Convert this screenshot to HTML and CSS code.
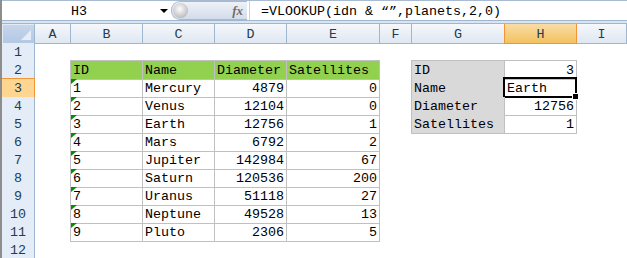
FILE: index.html
```
<!DOCTYPE html>
<html lang="en">
<head>
    <meta charset="UTF-8">
    <title>Planets - VLOOKUP</title>
    <link rel="stylesheet" href="styles.css">
</head>
<body>
    <div class="excel">
        <div class="fbar">
            <div class="namebox"><span class="ref">H3</span><span class="drop"></span></div>
            <div class="fxbox"><span class="ball"></span><span class="fx">fx</span></div>
            <div class="formula">=VLOOKUP(idn &amp; “”,planets,2,0)</div>
        </div>
        <div class="split"></div>

        <div class="sheet">
            <div class="row head">
                <div class="corner"></div>
                <div class="ch">A</div><div class="ch">B</div><div class="ch">C</div><div class="ch">D</div>
                <div class="ch">E</div><div class="ch">F</div><div class="ch">G</div><div class="ch sel">H</div><div class="ch">I</div>
            </div>
            <div class="row">
                <div class="rh">1</div>
                <div></div><div></div><div></div><div></div><div></div><div></div><div></div><div></div><div></div>
            </div>
            <div class="row">
                <div class="rh">2</div><div></div>
                <div class="c t hd top lft">ID</div><div class="c t hd top">Name</div><div class="c t hd top">Diameter</div><div class="c t hd top">Satellites</div>
                <div></div>
                <div class="c t lab top lft">ID</div><div class="c t num top">3</div><div></div>
            </div>
            <div class="row">
                <div class="rh sel">3</div><div></div>
                <div class="c t lft flag">1</div><div class="c t">Mercury</div><div class="c t num">4879</div><div class="c t num">0</div>
                <div></div>
                <div class="c t lab lft">Name</div><div class="c t active">Earth</div><div></div>
            </div>
            <div class="row">
                <div class="rh">4</div><div></div>
                <div class="c t lft flag">2</div><div class="c t">Venus</div><div class="c t num">12104</div><div class="c t num">0</div>
                <div></div>
                <div class="c t lab lft">Diameter</div><div class="c t num">12756</div><div></div>
            </div>
            <div class="row">
                <div class="rh">5</div><div></div>
                <div class="c t lft flag">3</div><div class="c t">Earth</div><div class="c t num">12756</div><div class="c t num">1</div>
                <div></div>
                <div class="c t lab lft">Satellites</div><div class="c t num">1</div><div></div>
            </div>
            <div class="row">
                <div class="rh">6</div><div></div>
                <div class="c t lft flag">4</div><div class="c t">Mars</div><div class="c t num">6792</div><div class="c t num">2</div>
                <div></div><div></div><div></div><div></div>
            </div>
            <div class="row">
                <div class="rh">7</div><div></div>
                <div class="c t lft flag">5</div><div class="c t">Jupiter</div><div class="c t num">142984</div><div class="c t num">67</div>
                <div></div><div></div><div></div><div></div>
            </div>
            <div class="row">
                <div class="rh">8</div><div></div>
                <div class="c t lft flag">6</div><div class="c t">Saturn</div><div class="c t num">120536</div><div class="c t num">200</div>
                <div></div><div></div><div></div><div></div>
            </div>
            <div class="row">
                <div class="rh">9</div><div></div>
                <div class="c t lft flag">7</div><div class="c t">Uranus</div><div class="c t num">51118</div><div class="c t num">27</div>
                <div></div><div></div><div></div><div></div>
            </div>
            <div class="row">
                <div class="rh">10</div><div></div>
                <div class="c t lft flag">8</div><div class="c t">Neptune</div><div class="c t num">49528</div><div class="c t num">13</div>
                <div></div><div></div><div></div><div></div>
            </div>
            <div class="row">
                <div class="rh">11</div><div></div>
                <div class="c t lft flag">9</div><div class="c t">Pluto</div><div class="c t num">2306</div><div class="c t num">5</div>
                <div></div><div></div><div></div><div></div>
            </div>
            <div class="row">
                <div class="rh">12</div>
                <div></div><div></div><div></div><div></div><div></div><div></div><div></div><div></div><div></div>
            </div>
        </div>
    </div>
</body>
</html>
```

FILE: styles.css
```
body {
    margin: 0;
    background: #fff;
    font-family: "Liberation Mono", "DejaVu Sans Mono", monospace;
    font-size: 13.33px;
    color: #000;
}

.excel {
    border-left: 2px solid #8d8d8d;
    height: 258px;
    overflow: hidden;
}

/* formula bar */
.fbar {
    display: flex;
    height: 20px;
    box-sizing: border-box;
    border-top: 1px solid #a9bbd1;
}

.namebox {
    width: 168px;
    display: flex;
    align-items: center;
    background: #fff;
}

.ref {
    flex: 1;
    text-align: center;
    padding: 3px 4px 0 0;
    line-height: 16px;
}

.drop {
    width: 0;
    height: 0;
    margin: 1px 2px 0 0;
    border-left: 4px solid transparent;
    border-right: 4px solid transparent;
    border-top: 4px solid #000;
}

.fxbox {
    width: 76px;
    margin: 0 2px 0 1px;
    display: flex;
    align-items: center;
    justify-content: space-between;
    box-sizing: border-box;
    border: 1px solid #a8b9cf;
    border-right: none;
    border-radius: 9px 0 0 9px;
    background: linear-gradient(#eef2f8, #d3dceb);
}

.ball {
    width: 15px;
    height: 15px;
    margin-left: 1px;
    border-radius: 50%;
    background: radial-gradient(circle at 45% 40%, #fdfdfd, #c9c9c9 60%, #9c9c9c);
}

.fx {
    font-family: "Liberation Serif", serif;
    font-style: italic;
    font-weight: bold;
    font-size: 13px;
    color: #6d6d6d;
    margin-right: 4px;
}

.formula {
    flex: 1;
    padding: 3px 0 0 11px;
    line-height: 16px;
    border-left: 1px solid #c5d3e5;
    background: #fff;
    white-space: nowrap;
}

.split {
    height: 4px;
    box-sizing: border-box;
    border-top: 1px solid #9eb6ce;
    border-bottom: 1px solid #9eb6ce;
    background: #dbe5f2;
}

/* grid */
.row {
    display: grid;
    grid-template-columns: 33px 36px 72px 72px 72px 93px 32px 93px 72px 1fr;
    height: 18px;
}

.row.head {
    height: 19px;
}

.row > div {
    box-sizing: border-box;
    position: relative;
    line-height: 16px;
    padding-top: 2px;
    white-space: nowrap;
}

.corner {
    border-right: 1px solid #9eb6ce;
    border-bottom: 1px solid #9eb6ce;
    background: linear-gradient(#c7d7ec, #b2c8e3);
    box-shadow: inset 1px 1px 0 #e3ebf6;
}

.corner::after {
    content: "";
    position: absolute;
    right: 3px;
    bottom: 3px;
    width: 10px;
    height: 10px;
    background: #e6edf6;
    clip-path: polygon(100% 0, 100% 100%, 0 100%);
}

.ch {
    text-align: center;
    color: #233c4f;
    border-right: 1px solid #9eb6ce;
    border-bottom: 1px solid #9eb6ce;
    background: linear-gradient(#f5f8fc, #dfe7f1);
    padding-top: 3px !important;
}

.ch.sel {
    border-color: #f29536;
    box-shadow: -1px 0 0 #f29536;
    background: linear-gradient(#f9dca6, #f2c25f);
}

.rh {
    text-align: center;
    color: #233c4f;
    border-right: 1px solid #9eb6ce;
    border-bottom: 1px solid #9eb6ce;
    background: #e4ecf7;
}

.rh.sel {
    border-color: #f29536;
    box-shadow: 0 -1px 0 #f29536;
    background: #ffd592;
}

/* cells */
.c {
    padding-left: 2px;
    padding-right: 2px;
}

.t {
    border-right: 1px solid #c0c0c0;
    border-bottom: 1px solid #c0c0c0;
}

.t.top {
    box-shadow: 0 -1px 0 #c0c0c0;
}

.t.lft {
    box-shadow: -1px 0 0 #c0c0c0;
}

.t.top.lft {
    box-shadow: 0 -1px 0 #c0c0c0, -1px 0 0 #c0c0c0, -1px -1px 0 #c0c0c0;
}

.hd {
    background: #92d050;
}

.lab {
    background: #d9d9d9;
}

.num {
    text-align: right;
}

.flag::before {
    content: "";
    position: absolute;
    left: 0;
    top: 0;
    width: 6px;
    height: 5px;
    background: #078a07;
    clip-path: polygon(0 0, 100% 0, 0 100%);
}

.active::after {
    content: "";
    position: absolute;
    left: -2px;
    top: -2px;
    right: -1px;
    bottom: -1px;
    border: 2px solid #000;
}

.active::before {
    content: "";
    position: absolute;
    right: -3px;
    bottom: -3px;
    width: 5px;
    height: 5px;
    background: #000;
    border: 1px solid #fff;
    z-index: 1;
}
```
